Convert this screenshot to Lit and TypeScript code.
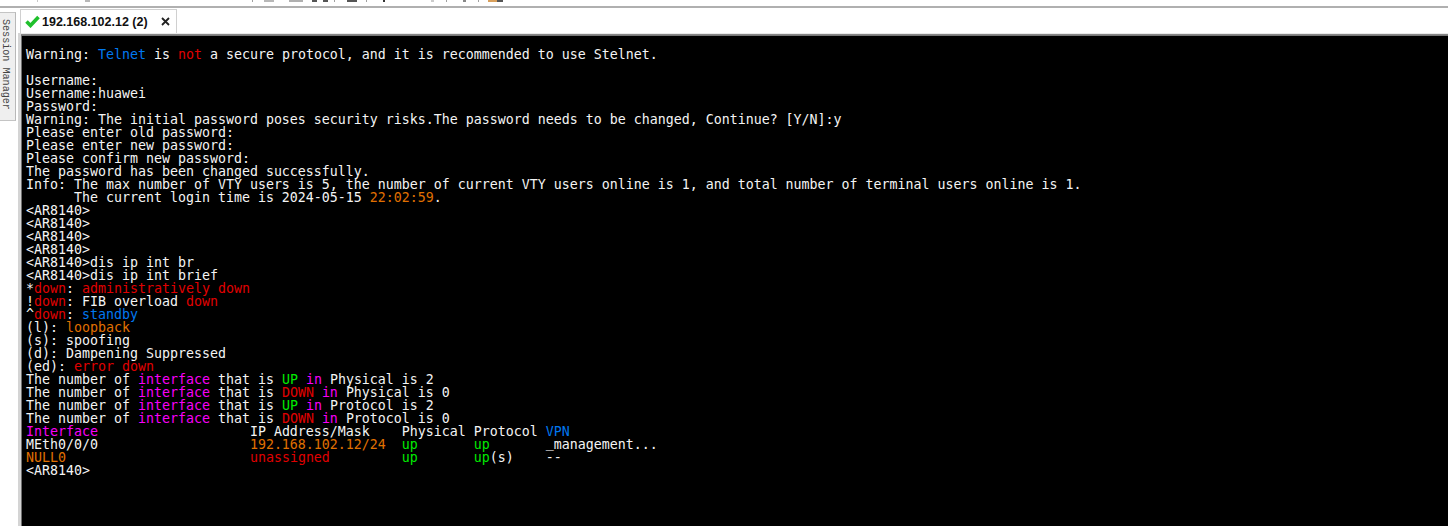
import { LitElement, html, css, svg } from "lit";
import { customElement } from "lit/decorators.js";

const bits: [number, number, string][] = [
  [37, 1, "#c8c8c8"], [85, 5, "#b8b8b8"], [252, 1, "#a0a0a0"], [264, 10, "#b8b8b8"], [289, 14, "#b0b0b0"],
  [312, 5, "#555"], [323, 5, "#555"], [334, 1, "#a0a0a0"], [347, 10, "#555"], [366, 1, "#a0a0a0"],
  [383, 2, "#333"], [431, 3, "#ccc"], [446, 1, "#a0a0a0"], [463, 3, "#888"], [478, 1, "#a0a0a0"],
  [488, 9, "#d9a05c"], [497, 6, "#555"],
];

const b = (t: string) => html`<span class="b">${t}</span>`;
const r = (t: string) => html`<span class="r">${t}</span>`;
const m = (t: string) => html`<span class="m">${t}</span>`;
const g = (t: string) => html`<span class="g">${t}</span>`;
const o = (t: string) => html`<span class="o">${t}</span>`;

const count = (state: string, cls: typeof g, where: string, n: number) =>
  html`The number of ${m("interface")} that is ${cls(state)} ${m("in")} ${where} is ${n}`;

const lines = [
  html`Warning: ${b("Telnet")} is ${r("not")} a secure protocol, and it is recommended to use Stelnet.`,
  html``,
  html`Username:`,
  html`Username:huawei`,
  html`Password:`,
  html`Warning: The initial password poses security risks.The password needs to be changed, Continue? [Y/N]:y`,
  html`Please enter old password:`,
  html`Please enter new password:`,
  html`Please confirm new password:`,
  html`The password has been changed successfully.`,
  html`Info: The max number of VTY users is 5, the number of current VTY users online is 1, and total number of terminal users online is 1.`,
  html`      The current login time is 2024-05-15 ${o("22:02:59")}.`,
  html`&lt;AR8140&gt;`,
  html`&lt;AR8140&gt;`,
  html`&lt;AR8140&gt;`,
  html`&lt;AR8140&gt;`,
  html`&lt;AR8140&gt;dis ip int br`,
  html`&lt;AR8140&gt;dis ip int brief`,
  html`*${r("down")}: ${r("administratively down")}`,
  html`!${r("down")}: FIB overload ${r("down")}`,
  html`^${r("down")}: ${b("standby")}`,
  html`(l): ${o("loopback")}`,
  html`(s): spoofing`,
  html`(d): Dampening Suppressed`,
  html`(ed): ${r("error down")}`,
  count("UP", g, "Physical", 2),
  count("DOWN", r, "Physical", 0),
  count("UP", g, "Protocol", 2),
  count("DOWN", r, "Protocol", 0),
  html`${m("Interface")}                   IP Address/Mask    Physical Protocol ${b("VPN")}`,
  html`MEth0/0/0                   ${o("192.168.102.12/24")}  ${g("up")}       ${g("up")}       <span class="us">_</span>management...`,
  html`${o("NULL0")}                       ${r("unassigned")}         ${g("up")}       ${g("up")}(s)    --`,
  html`&lt;AR8140&gt;`,
];

@customElement("app-root")
export class AppRoot extends LitElement {
  static styles = css`
    :host { display: block; width: 1448px; height: 526px; overflow: hidden; background: #fff; }
    .toolbar { display: flex; height: 6px; align-items: flex-start; background: #fff; }
    .bit { height: 2px; flex: none; }
    .rule { height: 2px; background: #b0b0b0; }
    .main { display: flex; height: 518px; }
    .side { width: 18px; flex: none; padding-top: 4px; background: #fff; }
    .session {
      width: 16px; height: 109px; box-sizing: border-box; background: #efefef;
      border-top: 1px solid #c4c4c4; border-right: 1px solid #b8b8b8; border-bottom: 1px solid #c4c4c4;
      padding-top: 6px; padding-right: 5px;
      writing-mode: vertical-rl; font: 10.1px/10px "Liberation Mono", monospace; color: #444;
      white-space: nowrap;
    }
    .work { flex: 1; display: flex; flex-direction: column; min-width: 0; }
    .tabs { height: 25px; display: flex; padding: 1px 0 0 2px; flex: none; box-sizing: border-box; }
    .tab {
      width: 157px; height: 24px; box-sizing: border-box; display: flex; align-items: center;
      border: 1px solid #d0d0d0; border-bottom: none; background: #fff; padding-left: 4px;
      font: bold 12.5px "Liberation Sans", Arial, sans-serif; color: #111; white-space: nowrap;
    }
    .check { width: 15px; height: 13px; margin-right: 2px; flex: none; }
    .close { width: 9px; height: 9px; margin-left: 13px; flex: none; }
    .frame { flex: 1; display: flex; flex-direction: column; border-left: 3px solid #d4d4d4; min-height: 0; }
    .shade { height: 3px; flex: none; background: linear-gradient(#efefef 0, #e4e4e4 33%, #8c8c8c 34%, #707070 100%); }
    .term {
      flex: 1; background: #000; color: #f4f4f4; padding: 12px 0 0 4px; overflow: hidden;
      border-left: 1px solid #707070; font: 13.29px/13px "DejaVu Sans Mono", monospace; white-space: pre;
    }
    .line { height: 13px; }
    .us { vertical-align: 2px; line-height: 0; }
    .b { color: #0078f0; } .r { color: #e00000; } .m { color: #f800f8; } .g { color: #00ea00; } .o { color: #e07000; }
  `;

  render() {
    let x = 0;
    return html`
      <div class="toolbar">
        ${bits.map(([at, w, c]) => {
          const ml = at - x;
          x = at + w;
          return html`<div class="bit" style="margin-left:${ml}px;width:${w}px;background:${c}"></div>`;
        })}
      </div>
      <div class="rule"></div>
      <div class="main">
        <div class="side"><div class="session">Session Manager</div></div>
        <div class="work">
          <div class="tabs">
            <div class="tab">
              <svg class="check" viewBox="0 0 15 13">
                ${svg`<path d="M1.5 6.5 L5.5 10.5 L13.5 2" fill="none" stroke="#1fc02c" stroke-width="3.6"/>`}
              </svg>
              <span>192.168.102.12 (2)</span>
              <svg class="close" viewBox="0 0 9 9">
                ${svg`<path d="M1 1 L8 8 M8 1 L1 8" stroke="#222" stroke-width="1.8"/>`}
              </svg>
            </div>
          </div>
          <div class="frame">
            <div class="shade"></div>
            <div class="term">${lines.map((l) => html`<div class="line">${l}</div>`)}</div>
          </div>
        </div>
      </div>
    `;
  }
}
